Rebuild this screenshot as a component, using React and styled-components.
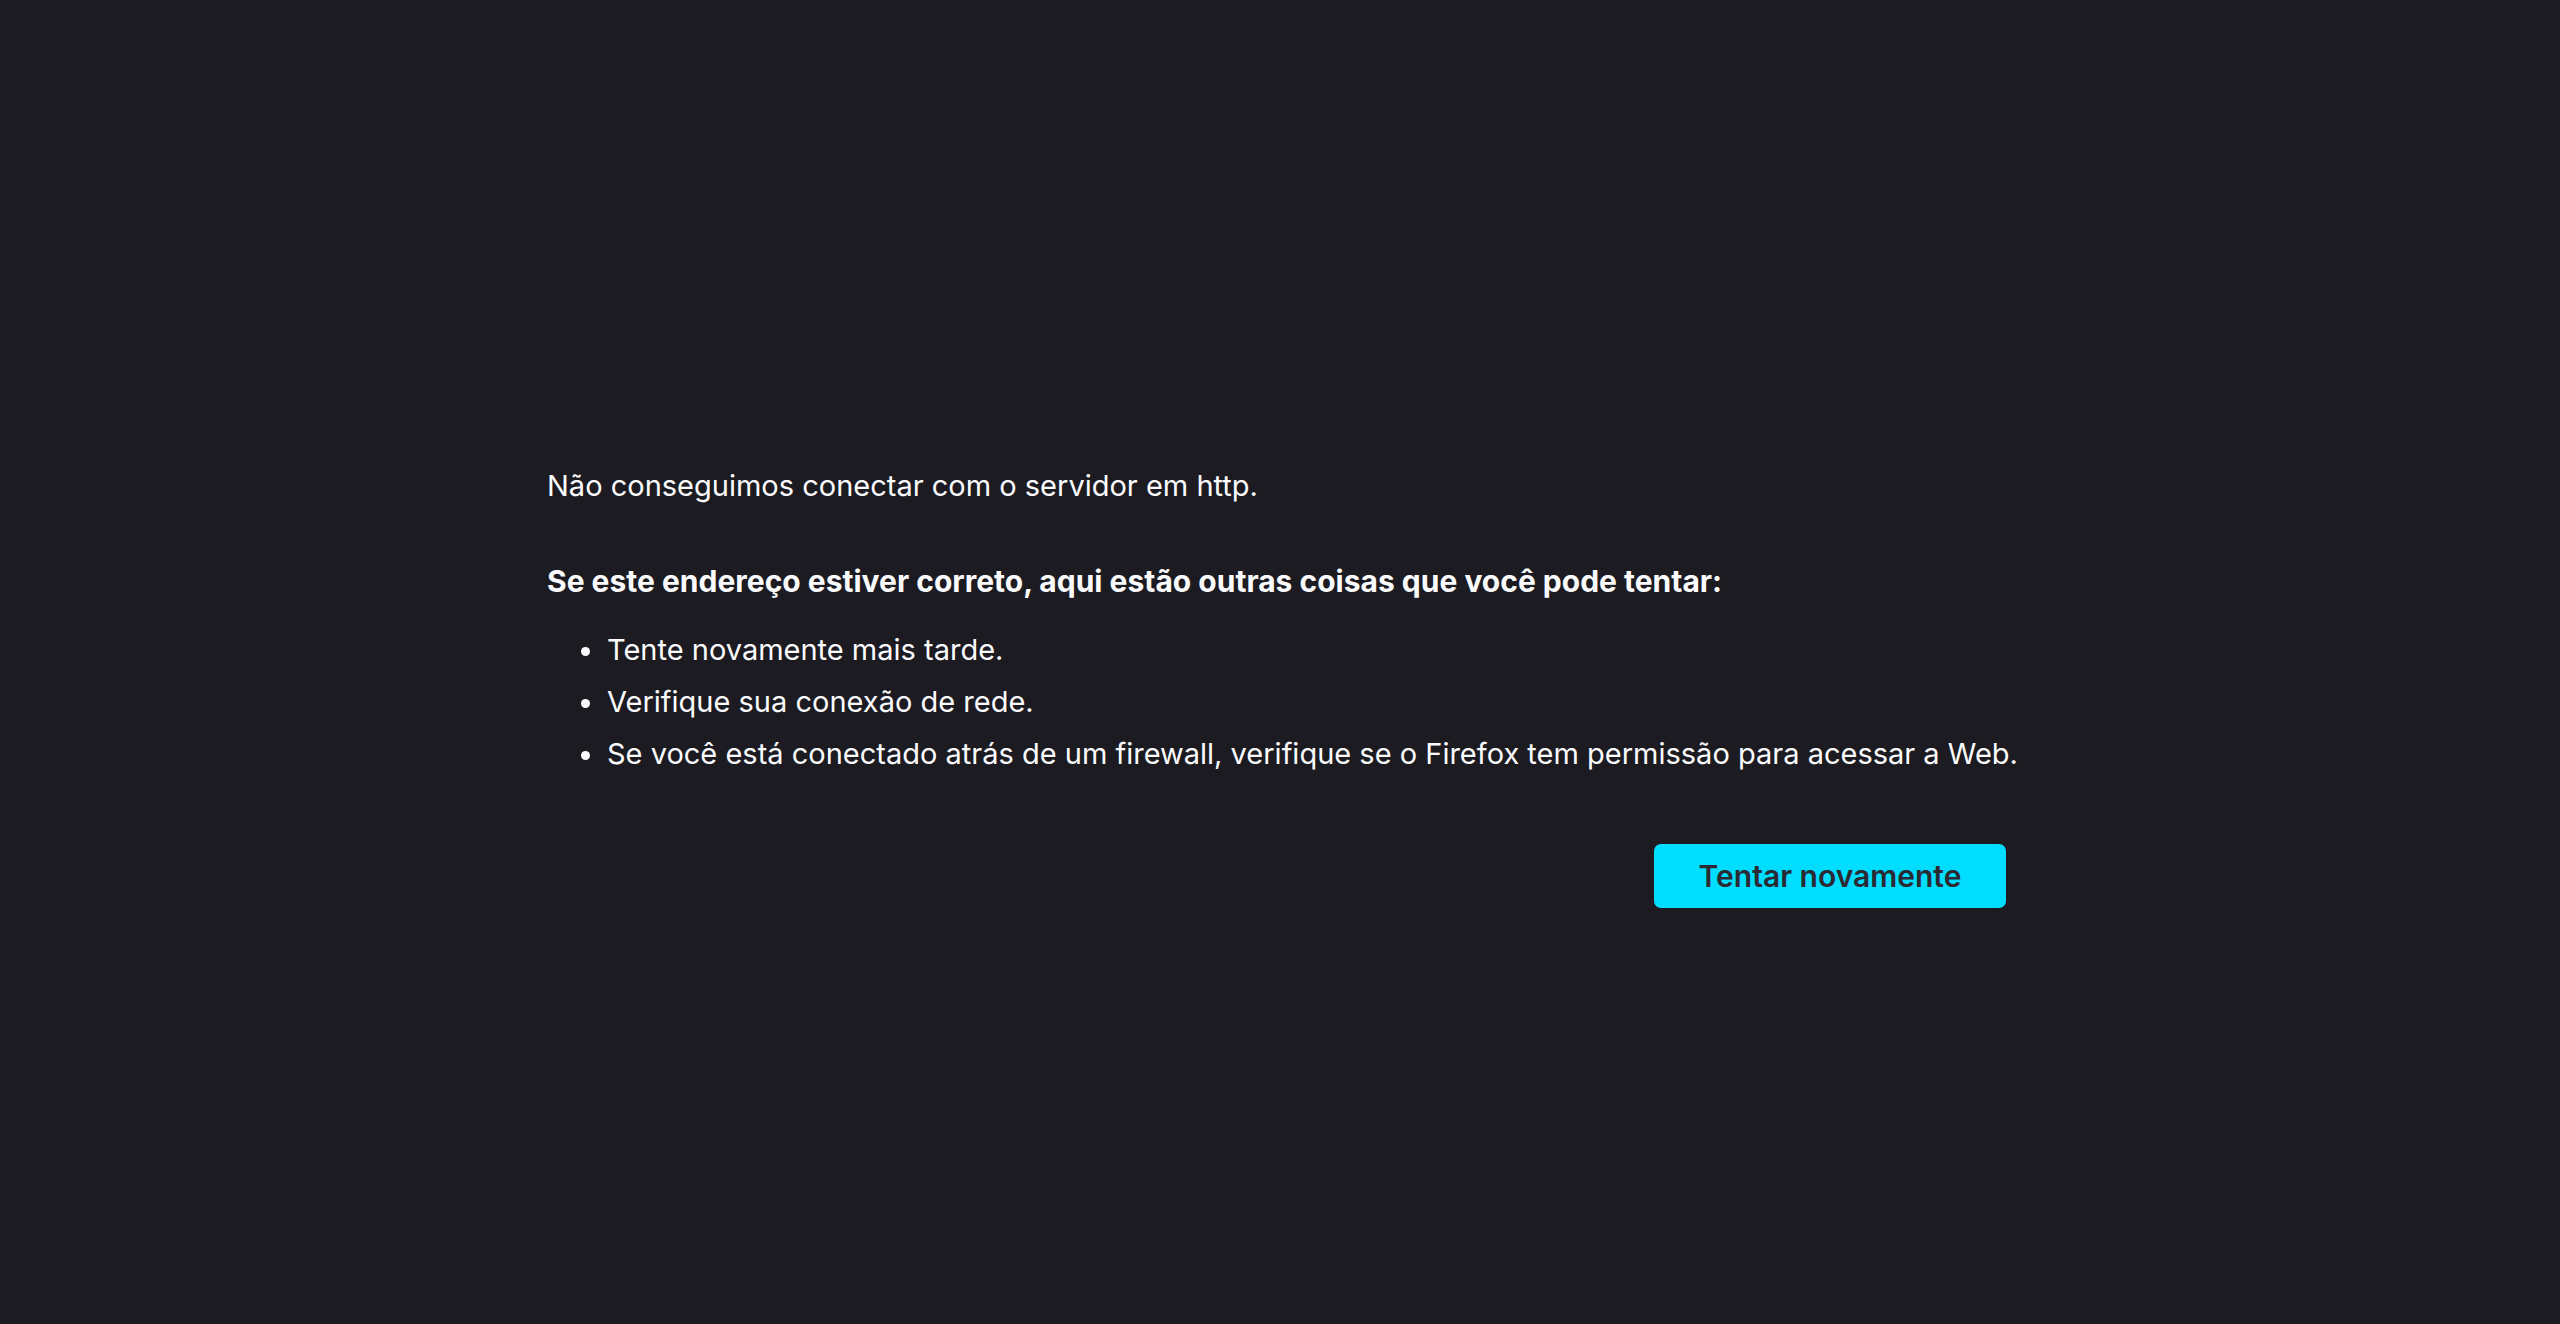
import React from "react";
import styled, { createGlobalStyle } from "styled-components";

const GlobalStyle = createGlobalStyle`
  html, body {
    margin: 0;
    padding: 0;
    background: #1c1b22;
  }
  body {
    font-family: Inter, "Noto Sans", "Liberation Sans", sans-serif;
    color: #fbfbfe;
  }
`;

const StyledPage = styled.main`
  min-height: 100vh;
  box-sizing: border-box;
  display: flex;
  justify-content: center;
  align-items: flex-start;
  padding-top: 463px;
`;

const Container = styled.div`
  width: 1466px;
  display: flex;
  flex-direction: column;
  font-size: 29px;
  line-height: 45px;
`;

const Message = styled.p`
  margin: 0 0 51px 0;
  font-weight: 400;
`;

const Heading = styled.p`
  margin: 0 0 23px 0;
  font-size: 30px;
  font-weight: 700;
`;

const List = styled.ul`
  margin: 0;
  padding-left: 59px;
`;

const Item = styled.li`
  white-space: nowrap;
  padding-left: 1px;
  margin-bottom: ${(props) => (props.last ? "0" : "7px")};
`;

const Actions = styled.div`
  display: flex;
  justify-content: flex-end;
  margin-top: 68px;
  padding-right: 7px;
`;

const RetryButton = styled.button`
  height: 64px;
  width: 352px;
  border: none;
  border-radius: 7px;
  background: #00ddff;
  color: #2b2a33;
  font-family: inherit;
  font-size: 30px;
  font-weight: 600;
  cursor: pointer;
  &:hover {
    background: #80ebff;
  }
`;

const tips = [
  "Tente novamente mais tarde.",
  "Verifique sua conexão de rede.",
  "Se você está conectado atrás de um firewall, verifique se o Firefox tem permissão para acessar a Web.",
];

export default function App() {
  return (
    <>
      <GlobalStyle />
      <StyledPage>
        <Container>
          <Message>Não conseguimos conectar com o servidor em http.</Message>
          <Heading>
            Se este endereço estiver correto, aqui estão outras coisas que você pode tentar:
          </Heading>
          <List>
            {tips.map((tip, i) => (
              <Item key={tip} last={i === tips.length - 1}>
                {tip}
              </Item>
            ))}
          </List>
          <Actions>
            <RetryButton>Tentar novamente</RetryButton>
          </Actions>
        </Container>
      </StyledPage>
    </>
  );
}
